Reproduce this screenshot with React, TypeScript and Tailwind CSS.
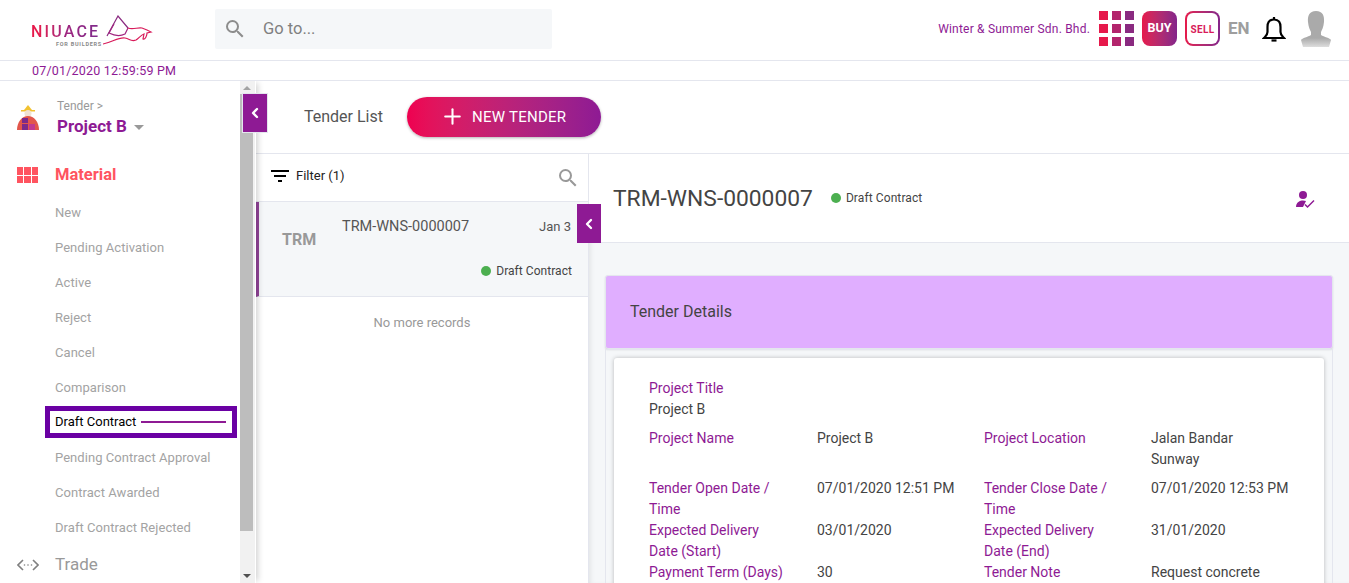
import React from 'react';
import { ChevronLeft, Plus } from 'lucide-react';
import { MdSearch } from 'react-icons/md';

const menuItems = [
  'New',
  'Pending Activation',
  'Active',
  'Reject',
  'Cancel',
  'Comparison',
  'Draft Contract',
  'Pending Contract Approval',
  'Contract Awarded',
  'Draft Contract Rejected',
];

const detailRows = [
  { l1: 'Project Name', v1: 'Project B', l2: 'Project Location', v2: 'Jalan Bandar\nSunway' },
  { l1: 'Tender Open Date / Time', v1: '07/01/2020 12:51 PM', l2: 'Tender Close Date / Time', v2: '07/01/2020 12:53 PM' },
  { l1: 'Expected Delivery Date (Start)', v1: '03/01/2020', l2: 'Expected Delivery Date (End)', v2: '31/01/2020' },
  { l1: 'Payment Term (Days)', v1: '30', l2: 'Tender Note', v2: 'Request concrete' },
];

function Logo() {
  return (
    <div className="relative w-[122px] h-[32px]">
      <div className="absolute left-[0px] top-[10px] text-[16px] leading-[16px] font-medium tracking-[2.2px] bg-gradient-to-r from-[#e6194b] from-10% via-[#a0257f] via-50% to-[#7d2a8c] bg-clip-text text-transparent">
        NIUACE
      </div>
      <div className="absolute left-[25px] top-[27px] text-[5.5px] leading-[6px] font-bold tracking-[0.75px] text-[#8a8a8a]">
        FOR BUILDERS
      </div>
      <svg viewBox="0 0 50 32" className="absolute left-[72px] top-[1px] w-[50px] h-[32px]" fill="none" strokeWidth="1.200">
        <path d="M4 21 L15 1 L25 13" stroke="#8a2a80" />
        <path d="M11 9 L6 18 C12 21 18 21 22 19 L25 13" stroke="#a0257f" />
        <path d="M25 13 C30 15 35 12 39 13 L44 15 L48 17 L44 18 C44 21 42 25 40 24 L41 19 C38 20 36 23 33 25 C28 27 27 24 22 23 C15 22 10 27 0 29" stroke="#d81b5a" />
      </svg>
    </div>
  );
}

function GridIcon() {
  return (
    <div className="grid grid-cols-3 gap-[4px] w-[35px] h-[35px]">
      {['#e6194b', '#b3246c', '#8a2a80', '#e6194b', '#b3246c', '#8a2a80', '#e6194b', '#b3246c', '#8a2a80'].map((c, i) => (
        <div key={i} style={{ backgroundColor: c }} />
      ))}
    </div>
  );
}

function BellIcon() {
  return (
    <svg viewBox="0 0 24 27" className="w-[24px] h-[27px]" fill="none" stroke="#000" strokeWidth="2.200">
      <path d="M12 1 L12 3.500" />
      <path d="M12 3.500 C7 3.500 5.500 7 5.500 11 L5.500 16 C5.500 19 3.500 20.500 2 22 L22 22 C20.500 20.500 18.500 19 18.500 16 L18.500 11 C18.500 7 17 3.500 12 3.500 Z" />
      <path d="M9.500 24.500 L14.500 24.500" />
    </svg>
  );
}

function Avatar() {
  return (
    <svg viewBox="0 0 32 36" className="w-[32px] h-[36px]">
      <defs>
        <linearGradient id="avatarFade" x1="0" y1="0" x2="0" y2="1">
          <stop offset="0.75" stopColor="#aaaaaa" />
          <stop offset="1" stopColor="#dddddd" />
        </linearGradient>
      </defs>
      <path d="M16 0 C23 0 24.500 5 24 11 C23.500 16 22 19 21 21 L21 24 C24 26 30 27 31 29 L29 36 L3 36 L1 29 C2 27 8 26 11 24 L11 21 C10 19 8.500 16 8 11 C7.500 5 9 0 16 0 Z" fill="url(#avatarFade)" />
    </svg>
  );
}

function WorkerIcon() {
  return (
    <svg viewBox="0 0 22 26" className="w-[22px] h-[26px]">
      <path d="M11 0 L15 5 L7 5 Z" fill="#f2c230" />
      <rect x="4" y="5" width="14" height="1.500" fill="#f2c230" />
      <circle cx="11" cy="8.500" r="3.500" fill="#f0e2d2" />
      <path d="M0 25 C0 17 5 11 11 11 C17 11 22 17 22 25 Z" fill="#e2574c" />
      <rect x="5" y="13" width="6" height="5" fill="#7b2a8a" />
      <rect x="12" y="13" width="5" height="5" fill="#e2574c" />
      <rect x="5" y="19" width="6" height="6" fill="#7b2a8a" />
      <rect x="12" y="19" width="6" height="6" fill="#c23a90" />
    </svg>
  );
}

function TradeIcon() {
  return (
    <svg viewBox="0 0 22 12" className="w-[22px] h-[12px]" fill="none" stroke="#808080" strokeWidth="1.600">
      <path d="M6 1 L1 6 L6 11" />
      <path d="M16 1 L21 6 L16 11" />
      <circle cx="7.500" cy="6" r="0.800" fill="#808080" stroke="none" />
      <circle cx="11" cy="6" r="0.800" fill="#808080" stroke="none" />
      <circle cx="14.500" cy="6" r="0.800" fill="#808080" stroke="none" />
    </svg>
  );
}

function CollapseTab({ className }: { className: string }) {
  return (
    <button className={`absolute z-20 bg-[#8e1a94] border border-[#e4e6ee] flex items-center justify-center ${className}`}>
      <ChevronLeft className="w-[16px] h-[16px] text-white" strokeWidth={3.5} />
    </button>
  );
}

function FilterIcon() {
  return (
    <svg viewBox="0 0 18 12" className="w-[18px] h-[12px]" fill="#000">
      <rect x="0" y="0" width="18" height="2" />
      <rect x="3" y="5" width="12" height="2" />
      <rect x="7" y="10" width="4" height="2" />
    </svg>
  );
}

function StatusDot() {
  return <span className="inline-block w-[10px] h-[10px] rounded-full bg-[#4caf50]" />;
}

export default function App() {
  return (
    <div className="w-[1349px] h-[583px] overflow-hidden bg-white flex flex-col font-['Roboto',sans-serif] text-[#3f4254]">
      {/* top bar */}
      <header className="h-[61px] shrink-0 border-b border-[#e4e6ee] flex items-center">
        <div className="w-[215px] pl-[31px]">
          <Logo />
        </div>
        <div className="w-[337px] h-[40px] bg-[#f5f7f9] rounded-[2px] flex items-center pl-[8px] mb-[2px]">
          <MdSearch className="w-[24px] h-[24px] text-[#8d8d8d]" />
          <span className="ml-[16px] text-[16.5px] text-[#808080]">Go to...</span>
        </div>
        <div className="ml-auto flex items-center pr-[17px] mb-[3px]">
          <span className="text-[12px] text-[#8e1a94] tracking-[0.2px] mr-[9px]">Winter &amp; Summer Sdn. Bhd.</span>
          <GridIcon />
          <div className="ml-[8px] w-[35px] h-[35px] rounded-[8px] bg-gradient-to-r from-[#e6194b] to-[#84248a] flex items-center justify-center text-white text-[12.5px] font-bold">
            BUY
          </div>
          <div className="ml-[8px] w-[35px] h-[35px] rounded-[8px] bg-gradient-to-r from-[#e6194b] to-[#84248a] p-[2px]">
            <div className="w-full h-full rounded-[6px] bg-white flex items-center justify-center pt-[2px] text-[10px] tracking-[0.4px] font-bold text-[#d81b5a]">
              SELL
            </div>
          </div>
          <span className="ml-[8px] w-[22px] text-[17px] font-bold text-[#9e9e9e]">EN</span>
          <div className="ml-[12px] mt-[2px]">
            <BellIcon />
          </div>
          <div className="ml-[14px]">
            <Avatar />
          </div>
        </div>
      </header>

      {/* clock */}
      <div className="h-[20px] shrink-0 border-b border-[#e4e6ee] pl-[32px] text-[12.5px] leading-[20px] text-[#8e1a94] tracking-[0.2px]">
        07/01/2020 12:59:59 PM
      </div>

      <div className="relative flex flex-1 min-h-0 overflow-hidden">
        <CollapseTab className="left-[242px] top-[12px] w-[26px] h-[40px]" />

        {/* sidebar */}
        <aside className="w-[256px] shrink-0 flex relative z-10 shadow-[4px_0_6px_-2px_rgba(0,0,0,0.18)]">
          <div className="w-[240px] pt-[16px]">
            <div className="flex h-[48px] pl-[17px]">
              <div className="pt-[8px]">
                <WorkerIcon />
              </div>
              <div className="ml-[18px]">
                <div className="text-[12px] leading-[18px] text-[#999]">Tender &gt;</div>
                <div className="-mt-[1px] flex items-center text-[17px] leading-[24px] font-bold text-[#8e1a94]">
                  Project B
                  <span className="ml-[7px] mt-[2px] w-0 h-0 border-l-[5px] border-r-[5px] border-t-[5px] border-l-transparent border-r-transparent border-t-[#999]" />
                </div>
              </div>
            </div>
            <div className="flex items-center h-[24px] pl-[17px] mt-[18px]">
              <div className="grid grid-cols-3 gap-[1px] w-[21px] h-[16px]">
                {[0, 1, 2, 3, 4, 5].map((i) => (
                  <div key={i} className="bg-[#ff5460]" />
                ))}
              </div>
              <span className="ml-[17px] text-[16.5px] font-bold text-[#ff5460]">Material</span>
            </div>
            <nav className="mt-[8px]">
              {menuItems.map((item) =>
                item === 'Draft Contract' ? (
                  <div key={item} className="ml-[45px] w-[192px] h-[32px] mt-[1px] mb-[2px] border-[5px] border-[#6a00a3] flex items-center pl-[5px] text-[13px] text-black">
                    {item}
                    <span className="ml-[5px] w-[85px] h-[2px] bg-[#8e1a94]" />
                  </div>
                ) : (
                  <div key={item} className="h-[35px] pl-[55px] flex items-center text-[13px] tracking-[0.05px] font-normal text-[#a3a3a3]">
                    {item}
                  </div>
                ),
              )}
            </nav>
            <div className="flex items-center pl-[17px] h-[30px] mt-[5px]">
              <TradeIcon />
              <span className="ml-[16px] text-[17px] text-[#999]">Trade</span>
            </div>
          </div>
          {/* scrollbar */}
          <div className="w-[15px] bg-[#f1f1f1] flex flex-col">
            <div className="h-[13px] w-[13px] flex items-center justify-center">
              <span className="w-0 h-0 border-l-[4px] border-r-[4px] border-b-[4px] border-l-transparent border-r-transparent border-b-[#a3a3a3]" />
            </div>
            <div className="w-[13px] h-[437px] bg-[#bdbdbd]" />
            <div className="mt-auto h-[14px] w-[13px] flex items-center justify-center">
              <span className="w-0 h-0 border-l-[4px] border-r-[4px] border-t-[4px] border-l-transparent border-r-transparent border-t-[#505050]" />
            </div>
          </div>
        </aside>

        <main className="flex-1 min-w-0 flex flex-col">
          <div className="h-[73px] shrink-0 border-b border-[#e4e6ee] flex items-center pl-[48px]">
            <span className="text-[16px] text-[#555]">Tender List</span>
            <button className="ml-[24px] mb-[1px] w-[194px] h-[40px] rounded-full bg-gradient-to-r from-[#ef0050] to-[#8e1a94] shadow-[0_1px_3px_rgba(0,0,0,0.3)] flex items-center pl-[33px] text-white text-[15px] tracking-[0.25px]">
              <Plus className="w-[25px] h-[25px]" strokeWidth={2} />
              <span className="ml-[7px] mt-[2px]">NEW TENDER</span>
            </button>
          </div>

          <div className="relative flex flex-1 min-h-0">
            <CollapseTab className="left-[321px] top-[50px] !border-0 w-[24px] h-[39px]" />

            {/* tender list */}
            <section className="w-[333px] shrink-0 border-r border-[#e4e6ee]">
              <div className="h-[48px] border-b border-[#e4e6ee] flex items-center pl-[15px] pr-[8px]">
                <div className="mb-[4px]">
                  <FilterIcon />
                </div>
                <span className="ml-[7px] mb-[4px] text-[13px] text-[#222]">Filter (1)</span>
                <MdSearch className="ml-auto w-[24px] h-[24px] text-[#999]" />
              </div>
              <div className="h-[95px] border-b border-[#e4e6ee] border-l-[3px] border-l-[#93459a] bg-[#f5f7f9] relative flex flex-col">
                <div className="flex pt-[16px] pl-[83px] pr-[17px]">
                  <span className="text-[14.5px] leading-[18px] text-[#555]">TRM-WNS-0000007</span>
                  <span className="ml-auto text-[13px] leading-[18px] text-[#555]">Jan 3</span>
                </div>
                <span className="absolute left-[23px] top-[29px] text-[16px] leading-[18px] font-bold text-[#999]">TRM</span>
                <div className="mt-auto mb-[17px] pr-[16px] flex items-center justify-end">
                  <StatusDot />
                  <span className="ml-[5px] text-[12px] tracking-[0.05px] leading-[16px] text-[#444]">Draft Contract</span>
                </div>
              </div>
              <div className="mt-[17px] text-center text-[13px] leading-[18px] text-[#999]">No more records</div>
            </section>

            {/* detail */}
            <section className="flex-1 min-w-0 bg-[#f5f7f9] flex flex-col shadow-[inset_4px_0_6px_-4px_rgba(0,0,0,0.12)]">
              <div className="h-[89px] shrink-0 bg-white border-b border-[#e4e6ee] flex items-start pt-[30px] pl-[24px] pr-[34px]">
                <span className="text-[22.8px] leading-[30px] text-[#444]">TRM-WNS-0000007</span>
                <div className="ml-[18px] mt-[6px] flex items-center">
                  <StatusDot />
                  <span className="ml-[5px] text-[12px] tracking-[0.1px] leading-[16px] text-[#444]">Draft Contract</span>
                </div>
                <svg viewBox="0 0 20 20" className="ml-auto mt-[6px] w-[20px] h-[20px]" fill="#8e1a94">
                  <circle cx="8" cy="5" r="4" />
                  <path d="M1 17 C1 12 5 10.500 8 10.500 C9 10.500 10 10.700 11 11 L8 17 Z" />
                  <path d="M10 14.500 L12.500 17 L19 10.500" fill="none" stroke="#8e1a94" strokeWidth="1.500" />
                </svg>
              </div>
              <div className="mt-[32px] ml-[16px] mr-[16px] flex-1 min-h-0">
                <div className="h-[74px] bg-[#e0aeff] border border-[#e4e6ee] rounded-[3px] shadow-[0_1px_2px_rgba(0,0,0,0.12)] flex items-center pl-[24px] text-[16px] text-[#444]">
                  Tender Details
                </div>
                <div className="border border-[#e4e6ee] px-[8px] pt-[8px] h-[300px]">
                  <div className="bg-white rounded-[3px] shadow-[0_0_4px_rgba(0,0,0,0.25)] pl-[35px] pr-[5px] pt-[20px] h-[300px] text-[14px] leading-[21px]">
                    <div className="text-[#8e1a94]">Project Title</div>
                    <div className="text-[#444]">Project B</div>
                    <div className="mt-[8px] grid grid-cols-[168px_167px_167px_1fr]">
                      {detailRows.map((r, i) => (
                        <React.Fragment key={r.l1}>
                          <div className="text-[#8e1a94] pr-[28px]">{r.l1}</div>
                          <div className="text-[#444]">{r.v1}</div>
                          <div className="text-[#8e1a94] pr-[28px]">{r.l2}</div>
                          <div className={`text-[#444] whitespace-pre-line ${i === 0 ? 'pb-[8px]' : ''}`}>{r.v2}</div>
                        </React.Fragment>
                      ))}
                    </div>
                  </div>
                </div>
              </div>
            </section>
          </div>
        </main>
      </div>
    </div>
  );
}
